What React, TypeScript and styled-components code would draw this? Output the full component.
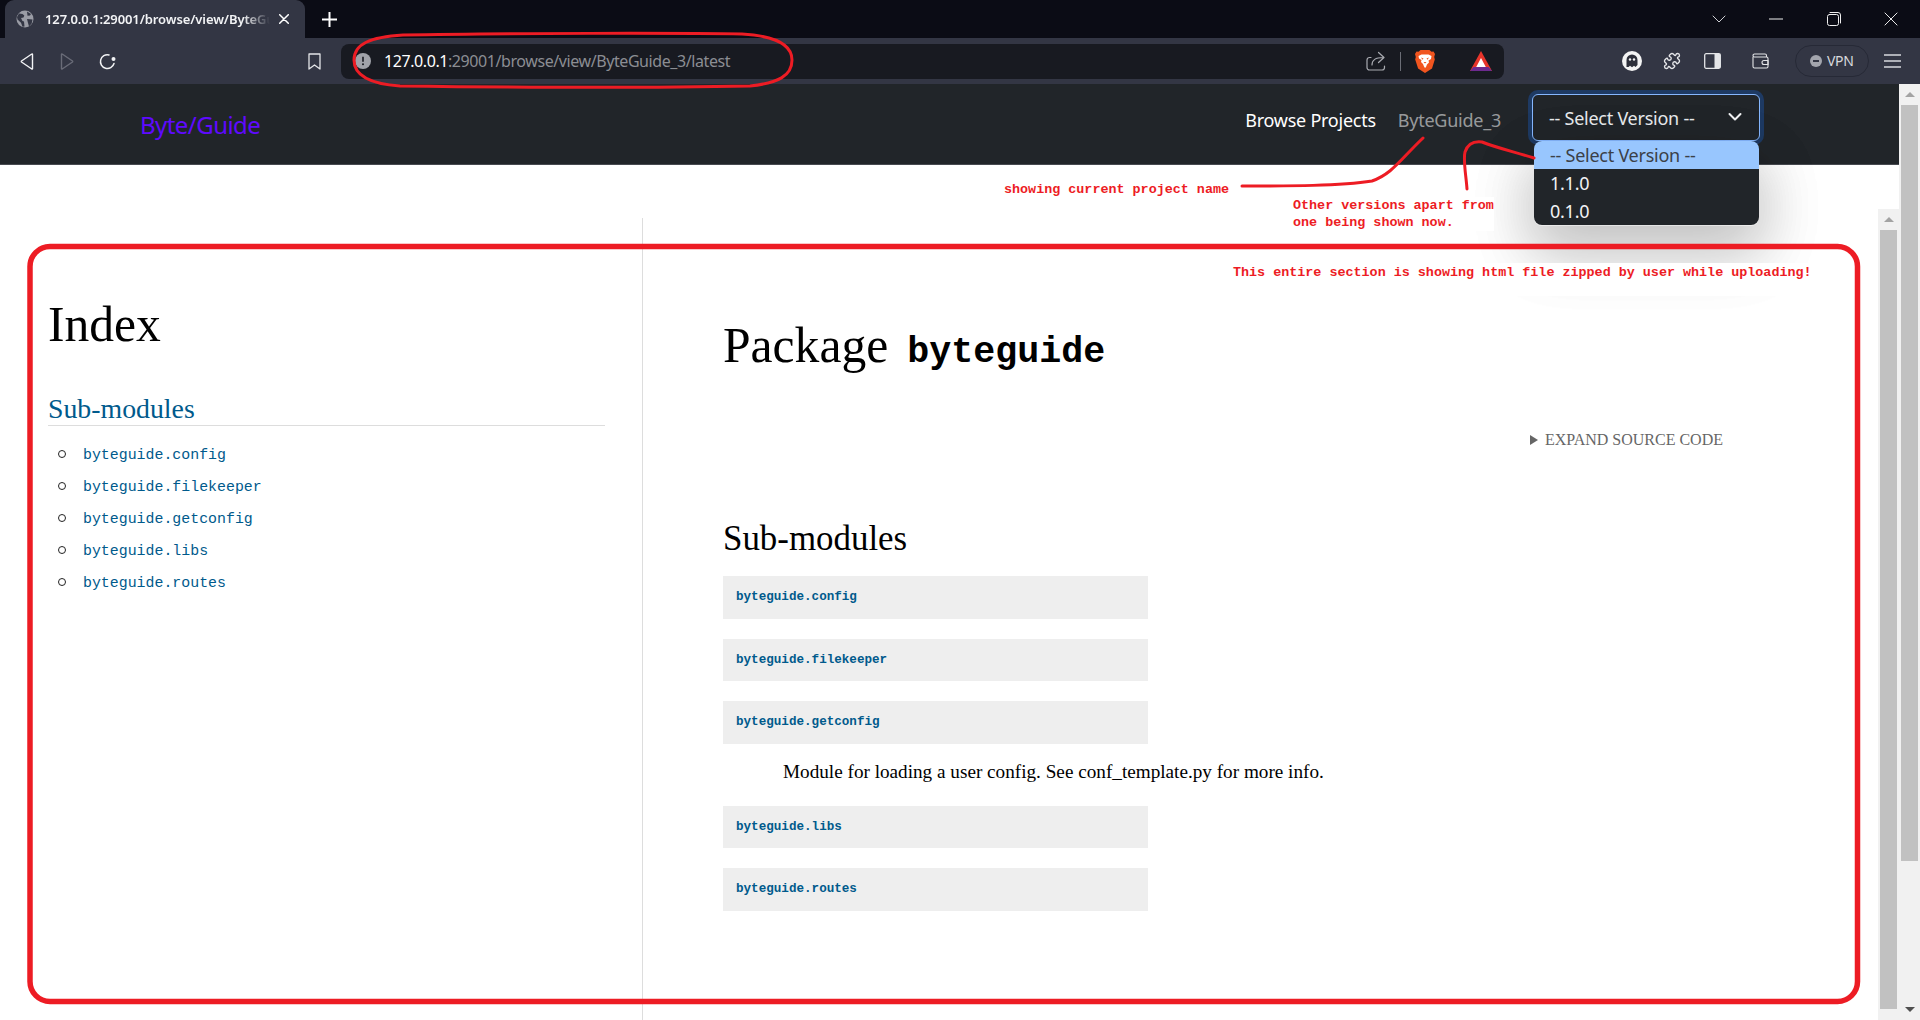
import React from "react";
import styled, { createGlobalStyle } from "styled-components";

const Global = createGlobalStyle`
  html, body { margin: 0; padding: 0; height: 100%; overflow: hidden; background: #fff; }
  #root { height: 100%; }
  * { box-sizing: border-box; }
`;

const UI = `"Noto Sans", "Open Sans", sans-serif`;
const SERIF = `"Liberation Serif", "Times New Roman", serif`;
const MONO = `"Liberation Mono", "DejaVu Sans Mono", monospace`;
const RED = "#ed1c24";
const LINK = "#005a8c";

const Shell = styled.div`
  position: relative;
  width: 1920px;
  height: 1020px;
  display: flex;
  flex-direction: column;
  overflow: hidden;
  background: #fff;
`;

/* ---------- browser chrome ---------- */
const TabStrip = styled.div`
  height: 38px;
  flex: none;
  display: flex;
  align-items: stretch;
  background: #0b0c15;
  color: #fff;
`;
const Tab = styled.div`
  width: 300px;
  margin-left: 5px;
  display: flex;
  align-items: center;
  padding: 0 0 0 11px;
  background: #333644;
  border-radius: 9px 9px 0 0;
`;
const TabTitle = styled.span`
  width: 225px;
  margin-left: 11px;
  font: 600 13px/18px ${UI};
  letter-spacing: -0.1px;
  color: #f2f3f5;
  white-space: nowrap;
  overflow: hidden;
  -webkit-mask-image: linear-gradient(90deg, #000 88%, transparent 100%);
  mask-image: linear-gradient(90deg, #000 88%, transparent 100%);
`;
const TabClose = styled.span`
  display: flex;
  margin-left: 9px;
`;
const NewTab = styled.span`
  display: flex;
  align-items: center;
  margin-left: 17px;
`;
const WindowControls = styled.div`
  margin-left: auto;
  display: flex;
`;
const WindowButton = styled.span`
  width: 57.5px;
  display: flex;
  align-items: center;
  justify-content: center;
`;

const Toolbar = styled.div`
  height: 46px;
  flex: none;
  display: flex;
  align-items: center;
  padding-left: 7px;
  background: #333644;
`;
const ToolSlot = styled.span<{ $gapLeft?: number }>`
  width: 40px;
  height: 40px;
  flex: none;
  display: flex;
  align-items: center;
  justify-content: center;
  margin-left: ${(p) => p.$gapLeft ?? 0}px;
`;
const UrlBar = styled.div`
  width: 1163px;
  height: 35px;
  margin-left: 7px;
  margin-right: 108px;
  flex: none;
  display: flex;
  align-items: center;
  padding: 0 12px 0 14px;
  background: #181a21;
  border-radius: 8px;
`;
const UrlText = styled.span`
  margin-left: 13px;
  font: 400 16px/22px ${UI};
  letter-spacing: -0.42px;
  color: #8b8d93;
  white-space: nowrap;
`;
const UrlHost = styled.span`
  color: #fff;
`;
const UrlActions = styled.div`
  margin-left: auto;
  display: flex;
  align-items: center;
  gap: 14px;
`;
const UrlDivider = styled.span`
  width: 1px;
  height: 19px;
  background: #6b6d76;
`;
const VpnPill = styled.span`
  width: 74px;
  height: 32px;
  margin-left: 15px;
  flex: none;
  display: flex;
  align-items: center;
  padding-left: 14px;
  gap: 5px;
  border: 1px solid #262936;
  border-radius: 16px;
  font: 400 14px/18px ${UI};
  letter-spacing: -0.3px;
  color: #d8d9dd;
`;
const VpnDot = styled.span`
  position: relative;
  width: 12px;
  height: 12px;
  border-radius: 50%;
  background: #a3a5ad;
  &::after {
    content: "";
    position: absolute;
    left: 3px;
    right: 3px;
    top: 5px;
    height: 2px;
    background: #333644;
  }
`;

/* ---------- page ---------- */
const PageRow = styled.div`
  flex: 1;
  min-height: 0;
  display: flex;
`;
const PageMain = styled.div`
  flex: 1;
  min-width: 0;
  display: flex;
  flex-direction: column;
`;
const Navbar = styled.nav`
  height: 81px;
  flex: none;
  display: flex;
  align-items: flex-start;
  padding: 0 139px 0 140px;
  background: #212529;
  border-bottom: 1px solid #474a50;
`;
const Logo = styled.span`
  margin-top: 25px;
  font: 400 24px/32px ${UI};
  letter-spacing: -0.55px;
  color: #5f0aff;
`;
const NavLinks = styled.div`
  margin-left: auto;
  display: flex;
  gap: 22px;
  margin-top: 22px;
`;
const NavLink = styled.span<{ $muted?: boolean }>`
  font: 400 18px/28px ${UI};
  letter-spacing: -0.25px;
  color: ${(p) => (p.$muted ? "rgba(255,255,255,0.55)" : "#fff")};
`;
const SelectWrap = styled.div`
  position: relative;
  width: 228px;
  height: 47px;
  margin-top: 10px;
  margin-left: 31px;
  z-index: 3;
`;
const SelectBox = styled.div`
  width: 100%;
  height: 100%;
  display: flex;
  align-items: center;
  padding-left: 16px;
  border: 1px solid #86b7fe;
  border-radius: 6px;
  box-shadow: 0 0 0 4px #1e3a63;
  background: #212529;
  font: 400 18px/26px ${UI};
  letter-spacing: -0.25px;
  color: #e9ecef;
`;
const SelectChevron = styled.span`
  display: flex;
  margin-left: auto;
  margin-right: 17px;
  margin-top: -2px;
`;
const OptionList = styled.div`
  position: absolute;
  left: 2px;
  top: 47px;
  width: 225px;
  border-radius: 8px;
  overflow: hidden;
  background: #212529;
  box-shadow: 0 24px 60px 6px rgba(0, 0, 0, 0.13);
`;
const OptionPanel = styled.div`
  position: absolute;
  left: 2px;
  top: 47px;
  width: 225px;
  height: 85px;
  border-radius: 8px;
  box-shadow: 0 24px 60px 6px rgba(0, 0, 0, 0.13);
`;
const Option = styled.div<{ $active?: boolean }>`
  height: 28px;
  padding-left: 16px;
  font: 400 18px/28px ${UI};
  letter-spacing: -0.25px;
  background: ${(p) => (p.$active ? "#98c6fe" : "transparent")};
  color: ${(p) => (p.$active ? "#3b4048" : "#f1f3f5")};
`;

const FrameRow = styled.div`
  flex: 1;
  min-height: 0;
  display: flex;
  margin-top: 44px;
`;
const Sidebar = styled.aside`
  width: 643px;
  flex: none;
  margin-top: 9px;
  padding: 77px 37px 0 48px;
  border-right: 1px solid #ddd;
`;
const IndexTitle = styled.h1`
  margin: 0;
  font: 400 49.6px/60px ${SERIF};
  color: #000;
`;
const IndexHeading = styled.h3`
  margin: 38px 0 0;
  font: 400 27.8px/32px ${SERIF};
  color: ${LINK};
  border-bottom: 1px solid #ddd;
`;
const IndexList = styled.ul`
  margin: 13px 0 0;
  padding: 0 0 0 10px;
  list-style: none;
`;
const IndexItem = styled.li`
  height: 32px;
  display: flex;
  align-items: center;
  gap: 17px;
  font: 400 14.9px/32px ${MONO};
  color: ${LINK};
`;
const Bullet = styled.span`
  width: 8px;
  height: 8px;
  margin-top: -2px;
  border: 1.5px solid #222;
  border-radius: 50%;
`;

const Doc = styled.main`
  flex: 1;
  min-width: 0;
  margin-top: 9px;
  padding: 98px 0 0 80px;
`;
const DocBody = styled.div`
  width: 1000px;
`;
const PackageTitle = styled.h1`
  margin: 0;
  font: 400 49.6px/60px ${SERIF};
  color: #000;
`;
const PackageCode = styled.code`
  margin-left: 19px;
  font: 700 36.7px/60px ${MONO};
`;
const ExpandRow = styled.div`
  height: 20px;
  margin-top: 48px;
  display: flex;
  align-items: center;
  justify-content: flex-end;
  gap: 7px;
  font: 400 16px/20px ${SERIF};
  color: #666;
  text-transform: uppercase;
`;
const ExpandCaret = styled.span`
  width: 0;
  height: 0;
  border-left: 8px solid #666;
  border-top: 5px solid transparent;
  border-bottom: 5px solid transparent;
`;
const SectionTitle = styled.h2`
  margin: 68px 0 16px;
  font: 400 34.9px/42px ${SERIF};
  color: #000;
`;
const ModuleBox = styled.div`
  width: 425px;
  height: 42.5px;
  margin-bottom: 20px;
  display: flex;
  align-items: center;
  padding-left: 13px;
  background: #eee;
  font: 700 12.6px/18px ${MONO};
  color: ${LINK};
`;
const ModuleNote = styled.p`
  margin: -4px 0 22px 60px;
  font: 400 19.2px/24px ${SERIF};
  color: #000;
`;

/* ---------- scroll bars ---------- */
const ScrollTrack = styled.div<{ $offset?: number }>`
  width: 21px;
  flex: none;
  display: flex;
  flex-direction: column;
  align-items: center;
  background: #f1f1f1;
`;
const ScrollArrow = styled.span<{ $down?: boolean }>`
  width: 21px;
  height: 21px;
  flex: none;
  display: flex;
  align-items: center;
  justify-content: center;
  &::before {
    content: "";
    border-left: 5px solid transparent;
    border-right: 5px solid transparent;
    ${(p) => (p.$down ? "border-top: 5px solid #505050;" : "border-bottom: 5px solid #a3a3a3;")}
  }
`;
const ScrollThumb = styled.span<{ $height: number }>`
  width: 17px;
  height: ${(p) => p.$height}px;
  flex: none;
  background: #c1c1c1;
`;
const ScrollFill = styled.span`
  flex: 1;
`;

/* ---------- annotations laid over the picture ---------- */
const Ink = styled.svg`
  position: absolute;
  left: 0;
  top: 0;
  z-index: 5;
  pointer-events: none;
`;
const Note = styled.div<{ $x: number; $y: number }>`
  position: absolute;
  left: ${(p) => p.$x}px;
  top: ${(p) => p.$y}px;
  z-index: 4;
  background: #fff;
  font: 700 13.4px/17px ${MONO};
  color: ${RED};
  white-space: pre;
`;
const WideNote = styled(Note)`
  padding: 1px 40px 15px 0;
`;

/* ---------- icons ---------- */
const Stroke = { fill: "none", stroke: "currentColor", strokeLinecap: "round", strokeLinejoin: "round" } as const;

const GlobeIcon = () => (
  <svg width="18" height="18" viewBox="0 0 18 18">
    <circle cx="9" cy="9" r="8.5" fill="#9a9ca5" />
    <path d="M3 3.5l3.5.5 1.8 1.5-.8 2-2.5.5L6.5 11l1.5.5.5 5-2 .2-1.5-4L1.5 9.5 1 7zM11 1.5l4 2.5-1 1.5-2.5.2zM11 9l5.5.5-.8 4-2.7 3-1-3.5z" fill="#333644" />
  </svg>
);
const CloseIcon = ({ size = 10, color = "#fff" }: { size?: number; color?: string }) => (
  <svg width={size} height={size} viewBox="0 0 10 10" style={{ color }}>
    <path d="M.7.7l8.6 8.6M9.3.7L.7 9.3" {...Stroke} strokeWidth={size > 12 ? 0.7 : 1.5} />
  </svg>
);
const PlusIcon = () => (
  <svg width="15" height="15" viewBox="0 0 15 15" color="#fff">
    <path d="M7.5 0v15M0 7.5h15" {...Stroke} strokeLinecap="butt" strokeWidth="2" />
  </svg>
);
const DownChevronThin = () => (
  <svg width="14" height="8" viewBox="0 0 14 8" color="#cfd0d4">
    <path d="M1 1l6 6 6-6" {...Stroke} strokeWidth="1" />
  </svg>
);
const MinIcon = () => (
  <svg width="14" height="2" viewBox="0 0 14 2" color="#f0f0f0">
    <path d="M0 1h14" {...Stroke} strokeWidth="1" />
  </svg>
);
const RestoreIcon = () => (
  <svg width="14" height="14" viewBox="0 0 14 14" color="#f0f0f0">
    <rect x=".5" y="2.5" width="11" height="11" rx="2" {...Stroke} />
    <path d="M3 .5h8a2.5 2.5 0 0 1 2.5 2.5v8" {...Stroke} />
  </svg>
);
const BackIcon = ({ dim, flip }: { dim?: boolean; flip?: boolean }) => (
  <svg width="14" height="17" viewBox="0 0 14 17" color={dim ? "#6a6c78" : "#f2f3f5"} style={flip ? { transform: "scaleX(-1)" } : undefined}>
    <path d="M12.5 1.3v14.4a.4.4 0 0 1-.7.3L1.5 9a.7.7 0 0 1 0-1L11.800 1a.4.4 0 0 1 .7.3z" {...Stroke} strokeWidth="1.4" />
  </svg>
);
const ReloadIcon = () => (
  <svg width="17" height="17" viewBox="0 0 17 17" color="#f2f3f5">
    <path d="M15 10.500A6.900 6.900 0 1 1 10 1.900" {...Stroke} strokeWidth="1.500" />
    <circle cx="14.500" cy="6" r="2" fill="#f2f3f5" />
  </svg>
);
const BookmarkIcon = () => (
  <svg width="13" height="17" viewBox="0 0 13 17" color="#e4e5e8">
    <path d="M1 1h11v15l-5.500-4L1 16z" {...Stroke} strokeWidth="1.300" />
  </svg>
);
const InfoIcon = () => (
  <svg width="16" height="16" viewBox="0 0 16 16" style={{ flex: "none" }}>
    <circle cx="8" cy="8" r="8" fill="#a0a2a9" />
    <path d="M8 3.800v5" stroke="#181a21" strokeWidth="1.600" />
    <circle cx="8" cy="11.300" r="1" fill="#181a21" />
  </svg>
);
const ShareIcon = () => (
  <svg width="20" height="20" viewBox="0 0 20 20" color="#a9abb1">
    <path d="M5 6.500H3.500A2.500 2.500 0 0 0 1 9v7.500A2.500 2.500 0 0 0 3.500 19h12.500a2.500 2.500 0 0 0 2.500-2.500V15" {...Stroke} strokeWidth="1.200" />
    <path d="M6 14c0-5 3.500-7.500 11-7.500M12.500 1.500l5.500 5-5.500 5" {...Stroke} strokeWidth="1.200" />
  </svg>
);
const LionIcon = () => (
  <svg width="20" height="24" viewBox="0 0 20 24">
    <path d="M5.500 1h9l2 1.800 2-.3L20 5l-.8 3 .6 2.500-2.800 9L10 24l-6.900-4.500-2.900-9L.8 8 0 5l1.500-2.500 2 .3z" fill="#f1551f" />
    <path d="M6.500 5.500h7l3 1.500-.5 3-2.500 1.500.5 2-2 2-1 2.500L10 19l-1-1.500-1-2.500-2-2 .5-2L4 9.500 3.500 7z" fill="#fff" />
    <path d="M6 8.500l2.500 1-1 1.200zM14 8.500l-2.500 1 1 1.200zM8.500 13h3L10 14.500z" fill="#f1551f" />
  </svg>
);
const BatIcon = () => (
  <svg width="22" height="20" viewBox="0 0 22 20">
    <path d="M11 0l11 20H0z" fill="#e8352b" />
    <path d="M0 20l3.500-4h15l3.500 4z" fill="#6c2a8f" />
    <path d="M11 7l4.800 9H6.200z" fill="#fff" />
  </svg>
);
const GhostBadge = () => (
  <svg width="20" height="20" viewBox="0 0 20 20">
    <circle cx="10" cy="10" r="10" fill="#f4f4f4" />
    <path d="M4.500 16V9a5.500 5.500 0 0 1 11 0v5l-2 2-1.500-1.300-2 1.500-2-1.500L6.500 16z" fill="#2d2f3a" />
    <circle cx="8" cy="8.500" r="1.200" fill="#f4f4f4" />
    <circle cx="12" cy="8.500" r="1.200" fill="#f4f4f4" />
  </svg>
);
const PuzzleIcon = () => (
  <svg width="18" height="18" viewBox="0 0 24 24" color="#e4e5e8">
    <path d="M15.390 4.390a1 1 0 0 0 1.680-.474 2.500 2.500 0 1 1 3.014 3.015 1 1 0 0 0-.474 1.680l1.683 1.682a2.414 2.414 0 0 1 0 3.414L19.610 15.390a1 1 0 0 1-1.680-.474 2.500 2.500 0 1 0-3.014 3.015 1 1 0 0 1 .474 1.680l-1.683 1.682a2.414 2.414 0 0 1-3.414 0L8.610 19.610a1 1 0 0 0-1.680.474 2.500 2.500 0 1 1-3.014-3.015 1 1 0 0 0 .474-1.680l-1.683-1.682a2.414 2.414 0 0 1 0-3.414L4.390 8.610a1 1 0 0 1 1.680.474 2.500 2.500 0 1 0 3.014-3.015 1 1 0 0 1-.474-1.680l1.683-1.682a2.414 2.414 0 0 1 3.414 0z" {...Stroke} strokeWidth="1.800" />
  </svg>
);
const PanelIcon = () => (
  <svg width="17" height="16" viewBox="0 0 17 16" color="#e4e5e8">
    <rect x=".7" y=".7" width="15.600" height="14.600" rx="1.500" {...Stroke} strokeWidth="1.300" />
    <path d="M10.500 1h5a1 1 0 0 1 1 1v12a1 1 0 0 1-1 1h-5z" fill="#e4e5e8" />
  </svg>
);
const WalletIcon = () => (
  <svg width="17" height="16" viewBox="0 0 17 16" color="#e4e5e8">
    <path d="M1 4V13.500A1.500 1.500 0 0 0 2.500 15h12a1.500 1.500 0 0 0 1.500-1.500v-8A1.500 1.500 0 0 0 14.500 4H2.500A1.500 1.500 0 0 1 1 2.500 1.500 1.500 0 0 1 2.500 1h10.500A1.500 1.500 0 0 1 14.500 2.500V4" {...Stroke} strokeWidth="1.100" />
    <path d="M16 7.500h-4a2 2 0 0 0 0 4h4z" {...Stroke} strokeWidth="1.100" />
  </svg>
);
const MenuIcon = () => (
  <svg width="17" height="14" viewBox="0 0 17 14" color="#d8d9dd">
    <path d="M0 1h17M0 7h17M0 13h17" {...Stroke} strokeLinecap="butt" strokeWidth="1.300" />
  </svg>
);
const SelectCaret = () => (
  <svg width="14" height="10" viewBox="0 0 14 10" color="#f2f3f5">
    <path d="M1.500 2l5.500 5.500L12.500 2" {...Stroke} strokeWidth="2" />
  </svg>
);

const modules = ["config", "filekeeper", "getconfig", "libs", "routes"];

export default function App() {
  return (
    <Shell>
      <Global />
      <TabStrip>
        <Tab>
          <GlobeIcon />
          <TabTitle>127.0.0.1:29001/browse/view/ByteGuide_3/latest</TabTitle>
          <TabClose>
            <CloseIcon />
          </TabClose>
        </Tab>
        <NewTab>
          <PlusIcon />
        </NewTab>
        <WindowControls>
          <WindowButton>
            <DownChevronThin />
          </WindowButton>
          <WindowButton>
            <MinIcon />
          </WindowButton>
          <WindowButton>
            <RestoreIcon />
          </WindowButton>
          <WindowButton>
            <CloseIcon size={14} color="#f0f0f0" />
          </WindowButton>
        </WindowControls>
      </TabStrip>
      <Toolbar>
        <ToolSlot>
          <BackIcon />
        </ToolSlot>
        <ToolSlot>
          <BackIcon dim flip />
        </ToolSlot>
        <ToolSlot>
          <ReloadIcon />
        </ToolSlot>
        <ToolSlot $gapLeft={167}>
          <BookmarkIcon />
        </ToolSlot>
        <UrlBar>
          <InfoIcon />
          <UrlText>
            <UrlHost>127.0.0.1</UrlHost>:29001/browse/view/ByteGuide_3/latest
          </UrlText>
          <UrlActions>
            <ShareIcon />
            <UrlDivider />
            <LionIcon />
            <span style={{ width: 7 }} />
            <BatIcon />
          </UrlActions>
        </UrlBar>
        <ToolSlot>
          <GhostBadge />
        </ToolSlot>
        <ToolSlot>
          <PuzzleIcon />
        </ToolSlot>
        <ToolSlot>
          <PanelIcon />
        </ToolSlot>
        <ToolSlot $gapLeft={8}>
          <WalletIcon />
        </ToolSlot>
        <VpnPill>
          <VpnDot />
          VPN
        </VpnPill>
        <ToolSlot $gapLeft={3}>
          <MenuIcon />
        </ToolSlot>
      </Toolbar>
      <PageRow>
        <PageMain>
          <Navbar>
            <Logo>Byte/Guide</Logo>
            <NavLinks>
              <NavLink>Browse Projects</NavLink>
              <NavLink $muted>ByteGuide_3</NavLink>
            </NavLinks>
            <SelectWrap>
              <SelectBox>
                -- Select Version --
                <SelectChevron>
                  <SelectCaret />
                </SelectChevron>
              </SelectBox>
              <OptionPanel />
              <OptionList>
                <Option $active>-- Select Version --</Option>
                <Option>1.1.0</Option>
                <Option>0.1.0</Option>
              </OptionList>
            </SelectWrap>
          </Navbar>
          <FrameRow>
            <Sidebar>
              <IndexTitle>Index</IndexTitle>
              <IndexHeading>Sub-modules</IndexHeading>
              <IndexList>
                {modules.map((m) => (
                  <IndexItem key={m}>
                    <Bullet />
                    byteguide.{m}
                  </IndexItem>
                ))}
              </IndexList>
            </Sidebar>
            <Doc>
              <DocBody>
                <PackageTitle>
                  Package<PackageCode>byteguide</PackageCode>
                </PackageTitle>
                <ExpandRow>
                  <ExpandCaret />
                  Expand source code
                </ExpandRow>
                <SectionTitle>Sub-modules</SectionTitle>
                {modules.map((m) => (
                  <React.Fragment key={m}>
                    <ModuleBox>byteguide.{m}</ModuleBox>
                    {m === "getconfig" && <ModuleNote>Module for loading a user config. See conf_template.py for more info.</ModuleNote>}
                  </React.Fragment>
                ))}
              </DocBody>
            </Doc>
            <ScrollTrack>
              <ScrollArrow />
              <ScrollThumb $height={779} />
              <ScrollFill />
            </ScrollTrack>
          </FrameRow>
        </PageMain>
        <ScrollTrack>
          <ScrollArrow />
          <ScrollThumb $height={756} />
          <ScrollFill />
          <ScrollArrow $down />
        </ScrollTrack>
      </PageRow>

      <Note $x={1004} $y={181}>showing current project name</Note>
      <Note $x={1293} $y={197}>{"Other versions apart from\none being shown now."}</Note>
      <WideNote $x={1233} $y={263}>This entire section is showing html file zipped by user while uploading!</WideNote>
      <Ink width="1920" height="1020" viewBox="0 0 1920 1020" fill="none" stroke={RED} strokeLinecap="round" strokeLinejoin="round">
        <rect x="30" y="246.500" width="1827.500" height="755" rx="20" strokeWidth="5.500" />
        <path d="M354 60C354 44 370 37 403 35C500 33 690 33 742 34C775 36 792 44 792 60C792 76 778 83 750 86C650 88 480 87 400 86C372 84 354 76 354 60Z" strokeWidth="3" />
        <path d="M1242 186C1290 186 1340 186 1372 181C1392 174 1400 160 1423 138" strokeWidth="3" />
        <path d="M1467 189C1466 175 1463 160 1465 152C1468 143 1474 141 1482 142C1497 148 1515 152 1534 158" strokeWidth="3" />
      </Ink>
    </Shell>
  );
}
